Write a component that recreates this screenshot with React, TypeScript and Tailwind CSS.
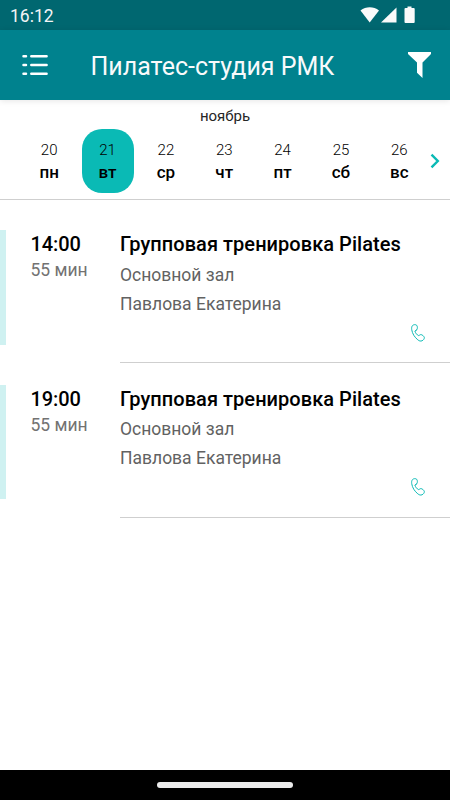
import React, { useState } from 'react';

interface Day {
  date: number;
  name: string;
}

interface Training {
  time: string;
  duration: string;
  title: string;
  room: string;
  trainer: string;
}

const DAYS: Day[] = [
  { date: 20, name: 'пн' },
  { date: 21, name: 'вт' },
  { date: 22, name: 'ср' },
  { date: 23, name: 'чт' },
  { date: 24, name: 'пт' },
  { date: 25, name: 'сб' },
  { date: 26, name: 'вс' },
];

const TRAININGS: Training[] = [
  {
    time: '14:00',
    duration: '55 мин',
    title: 'Групповая тренировка Pilates',
    room: 'Основной зал',
    trainer: 'Павлова Екатерина',
  },
  {
    time: '19:00',
    duration: '55 мин',
    title: 'Групповая тренировка Pilates',
    room: 'Основной зал',
    trainer: 'Павлова Екатерина',
  },
];

function StatusBar() {
  return (
    <div className="h-[30px] shrink-0 bg-[#006770] pl-[10px] pr-[34px] flex items-center justify-between">
      <span className="text-[17.5px] leading-[30px] text-gray-100 pt-px">16:12</span>
      <svg width="56" height="18" viewBox="0 0 56 18" fill="#fafafa">
        <path d="M.5 4.500C6 .2 13.500.2 19 4.500L9.700 16.500z" />
        <path d="M36.500 1.500v15H21z" />
        <path d="M47.500.5h4V2h2.200q1 0 1 1v13q0 1-1 1h-8.200q-1 0-1-1V3q0-1 1-1h2z" />
      </svg>
    </div>
  );
}

function Header() {
  return (
    <header className="relative z-10 h-[70px] shrink-0 bg-[#00828e] shadow-[0_1px_6px_rgba(0,0,0,0.1)] flex items-center pl-[22px] pr-[18px]">
      <button aria-label="Меню">
        <svg width="27" height="22" viewBox="0 0 27 22" stroke="#fff" strokeWidth="2.5" strokeLinecap="round">
          <path d="M1.500 2.300h2.500M9.300 2.300h15.300M1.500 11h2.500M9.300 11h15.300M1.500 19.700h2.500M9.300 19.700h15.300" />
        </svg>
      </button>
      <h1 className="flex-1 pl-[41.5px] pt-[4px] text-[25px] leading-8 text-gray-50 whitespace-nowrap">
        Пилатес-студия РМК
      </h1>
      <button aria-label="Фильтр">
        <svg width="24" height="26" viewBox="0 0 24 26" fill="#fff">
          <path d="M0 0h23v2l-8.500 8.500V26L9 20.800V10.500L0 2z" />
        </svg>
      </button>
    </header>
  );
}

function WeekPicker() {
  const [selected, setSelected] = useState(21);

  return (
    <section className="h-[100px] shrink-0 border-b border-[#cfcfcf] flex flex-col">
      <div className="h-[29px] pt-[6px] text-center text-[15px] leading-5 text-neutral-800">ноябрь</div>
      <div className="flex items-center pl-[20px]">
        <div className="w-[408.5px] flex shrink-0">
          {DAYS.map((day) => (
            <div key={day.date} className="flex-1 flex justify-center">
              <button
                onClick={() => setSelected(day.date)}
                className={`w-[52px] h-16 rounded-[20px] flex flex-col items-center pt-[11px] ${
                  day.date === selected ? 'bg-[#0abab5]' : ''
                }`}
              >
                <span className="text-[15px] leading-5 font-light text-black">{day.date}</span>
                <span className="text-[17px] leading-6 font-medium text-black">{day.name}</span>
              </button>
            </div>
          ))}
        </div>
        <button aria-label="Следующая неделя" className="pl-[0.5px]">
          <svg width="12" height="16" viewBox="0 0 12 16" fill="none" stroke="#0abab5" strokeWidth="2.4">
            <path d="M2.500 1.700 8.800 8l-6.300 6.300" />
          </svg>
        </button>
      </div>
    </section>
  );
}

function PhoneIcon() {
  return (
    <svg width="14" height="18" viewBox="0 0 14 18" fill="none" stroke="#0abab5" strokeWidth="1" strokeLinejoin="round">
      <path d="M1.500 1.600C2.500.5 4.700.3 5.700 1.300c.9 1.200.8 3 .3 4.300-.5.7-1.700.9-2.100 1.600.6 1.800 2 3.700 3.700 4.400.7.1 1.200-.9 2.100-1 1.500 0 3 1.300 3.600 2.800.2 1.500-1 2.800-2.300 3.400-1.500.6-2.900.1-4.200-1C3.700 13.400 1.200 9.500.7 5.500.5 4 .7 2.500 1.500 1.600z" />
      <path d="M3.900 7.200C4.300 6.600 5.500 6.500 6 5.600" strokeWidth="0.6" />
    </svg>
  );
}

function TrainingRow({ training }: { training: Training }) {
  return (
    <article className="flex h-[154.5px] items-start">
      <div className="w-[6px] h-[114.5px] shrink-0 bg-[#cff1f1]" />
      <div className="w-[114px] shrink-0 pl-[24.5px]">
        <div className="pt-px text-[20px] leading-[26px] tracking-[-0.1px] font-medium text-black">{training.time}</div>
        <div className="pt-px text-[17.5px] leading-6 text-[#727272]">{training.duration}</div>
      </div>
      <div className="flex-1 h-[133px] border-b border-[#cfcfcf]">
        <h2 className="pt-px text-[20px] leading-[26px] tracking-[0.05px] font-medium text-black whitespace-nowrap">
          {training.title}
        </h2>
        <p className="pt-[3.9px] text-[17.5px] leading-[29px] text-[#626262]">{training.room}</p>
        <p className="text-[17.5px] leading-[29px] text-[#626262]">{training.trainer}</p>
        <div className="flex justify-end pr-[25.5px] pt-[5px]">
          <PhoneIcon />
        </div>
      </div>
    </article>
  );
}

export default function App() {
  return (
    <div className="w-full h-screen bg-white flex flex-col overflow-hidden font-[Roboto,sans-serif]">
      <StatusBar />
      <Header />
      <WeekPicker />
      <main className="flex-1 pt-[30px]">
        {TRAININGS.map((training) => (
          <TrainingRow key={training.time} training={training} />
        ))}
      </main>
      <footer className="h-[30px] shrink-0 bg-black flex items-center justify-center">
        <div className="w-[136px] h-[6px] rounded-full bg-[#ebebeb]" />
      </footer>
    </div>
  );
}
